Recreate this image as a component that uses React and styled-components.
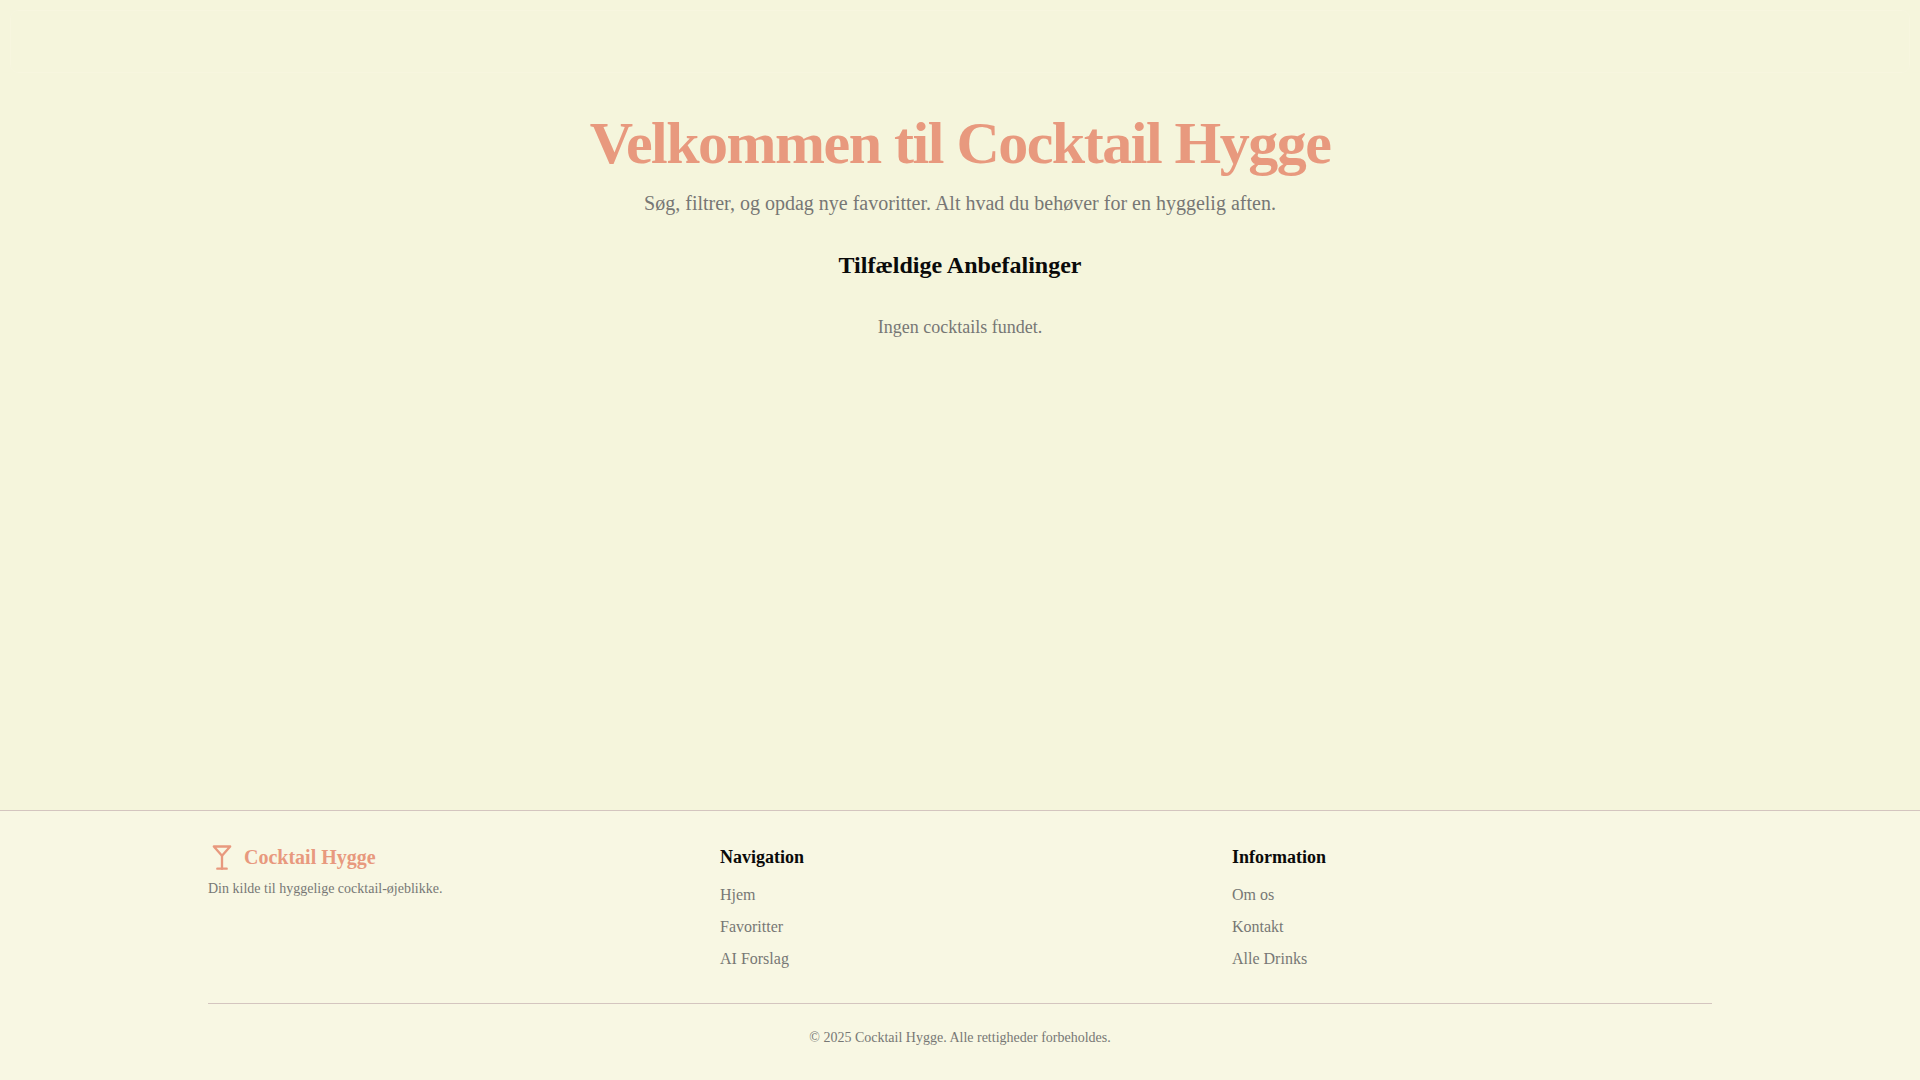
import React from 'react';
import styled, { createGlobalStyle } from 'styled-components';
import { Martini } from 'lucide-react';

const GlobalStyle = createGlobalStyle`
  *, *::before, *::after {
    box-sizing: border-box;
    margin: 0;
    padding: 0;
  }

  body {
    background: #f5f5dc;
    color: #0a0a0a;
    font-family: 'Liberation Serif', 'Times New Roman', serif;
    font-size: 16px;
    line-height: 24px;
  }
`;

const Page = styled.div`
  display: flex;
  flex-direction: column;
  min-height: 100vh;
`;

const Header = styled.header`
  height: 63px;
  margin: 10px 10px 0;
  border: 1px solid #f7f6df;
  border-radius: 8px;
`;

const Main = styled.main`
  flex: 1;
  width: 100%;
  max-width: 1536px;
  margin: 0 auto;
  padding: 40px 16px;
  text-align: center;
`;

const Hero = styled.section`
  margin-bottom: 32px;
`;

const Title = styled.h1`
  color: #e8997e;
  font-size: 60px;
  font-weight: 700;
  line-height: 60px;
  letter-spacing: -1.5px;
  margin-bottom: 16px;
`;

const Lead = styled.p`
  color: #777775;
  font-size: 20px;
  line-height: 28px;
`;

const SectionTitle = styled.h2`
  font-size: 24px;
  font-weight: 700;
  line-height: 32px;
  margin-bottom: 32px;
`;

const EmptyText = styled.p`
  color: #777775;
  font-size: 18px;
  line-height: 28px;
`;

const Footer = styled.footer`
  background: #f8f7e3;
  border-top: 1px solid #d4c5bf;
`;

const FooterInner = styled.div`
  width: 100%;
  max-width: 1536px;
  margin: 0 auto;
  padding: 32px 16px;
`;

const Columns = styled.div`
  display: grid;
  grid-template-columns: repeat(3, 1fr);
  gap: 32px;
`;

const Brand = styled.a`
  display: inline-flex;
  align-items: center;
  gap: 8px;
  margin-bottom: 8px;
  color: #e8997e;
  font-size: 20px;
  font-weight: 700;
  line-height: 28px;
  text-decoration: none;
`;

const SmallText = styled.p`
  color: #777775;
  font-size: 14px;
  line-height: 20px;
`;

const ColumnTitle = styled.h3`
  font-size: 18px;
  font-weight: 700;
  line-height: 28px;
  margin-bottom: 12px;
`;

const LinkList = styled.ul`
  display: flex;
  flex-direction: column;
  gap: 8px;
  list-style: none;
`;

const FooterLink = styled.a`
  color: #777775;
  text-decoration: none;

  &:hover {
    color: #e8997e;
  }
`;

const Copyright = styled.div`
  margin-top: 32px;
  padding-top: 24px;
  border-top: 1px solid #d4c5bf;
  text-align: center;
`;

const footerColumns = [
  { title: 'Navigation', links: ['Hjem', 'Favoritter', 'AI Forslag'] },
  { title: 'Information', links: ['Om os', 'Kontakt', 'Alle Drinks'] },
];

function App() {
  return (
    <Page>
      <GlobalStyle />
      <Header />

      <Main>
        <Hero>
          <Title>Velkommen til Cocktail Hygge</Title>
          <Lead>Søg, filtrer, og opdag nye favoritter. Alt hvad du behøver for en hyggelig aften.</Lead>
        </Hero>
        <section>
          <SectionTitle>Tilfældige Anbefalinger</SectionTitle>
          <EmptyText>Ingen cocktails fundet.</EmptyText>
        </section>
      </Main>

      <Footer>
        <FooterInner>
          <Columns>
            <div>
              <Brand href="#">
                <Martini size={28} />
                Cocktail Hygge
              </Brand>
              <SmallText>Din kilde til hyggelige cocktail-øjeblikke.</SmallText>
            </div>
            {footerColumns.map((column) => (
              <nav key={column.title} aria-label={column.title}>
                <ColumnTitle>{column.title}</ColumnTitle>
                <LinkList>
                  {column.links.map((link) => (
                    <li key={link}>
                      <FooterLink href="#">{link}</FooterLink>
                    </li>
                  ))}
                </LinkList>
              </nav>
            ))}
          </Columns>
          <Copyright>
            <SmallText>© 2025 Cocktail Hygge. Alle rettigheder forbeholdes.</SmallText>
          </Copyright>
        </FooterInner>
      </Footer>
    </Page>
  );
}

export default App;
